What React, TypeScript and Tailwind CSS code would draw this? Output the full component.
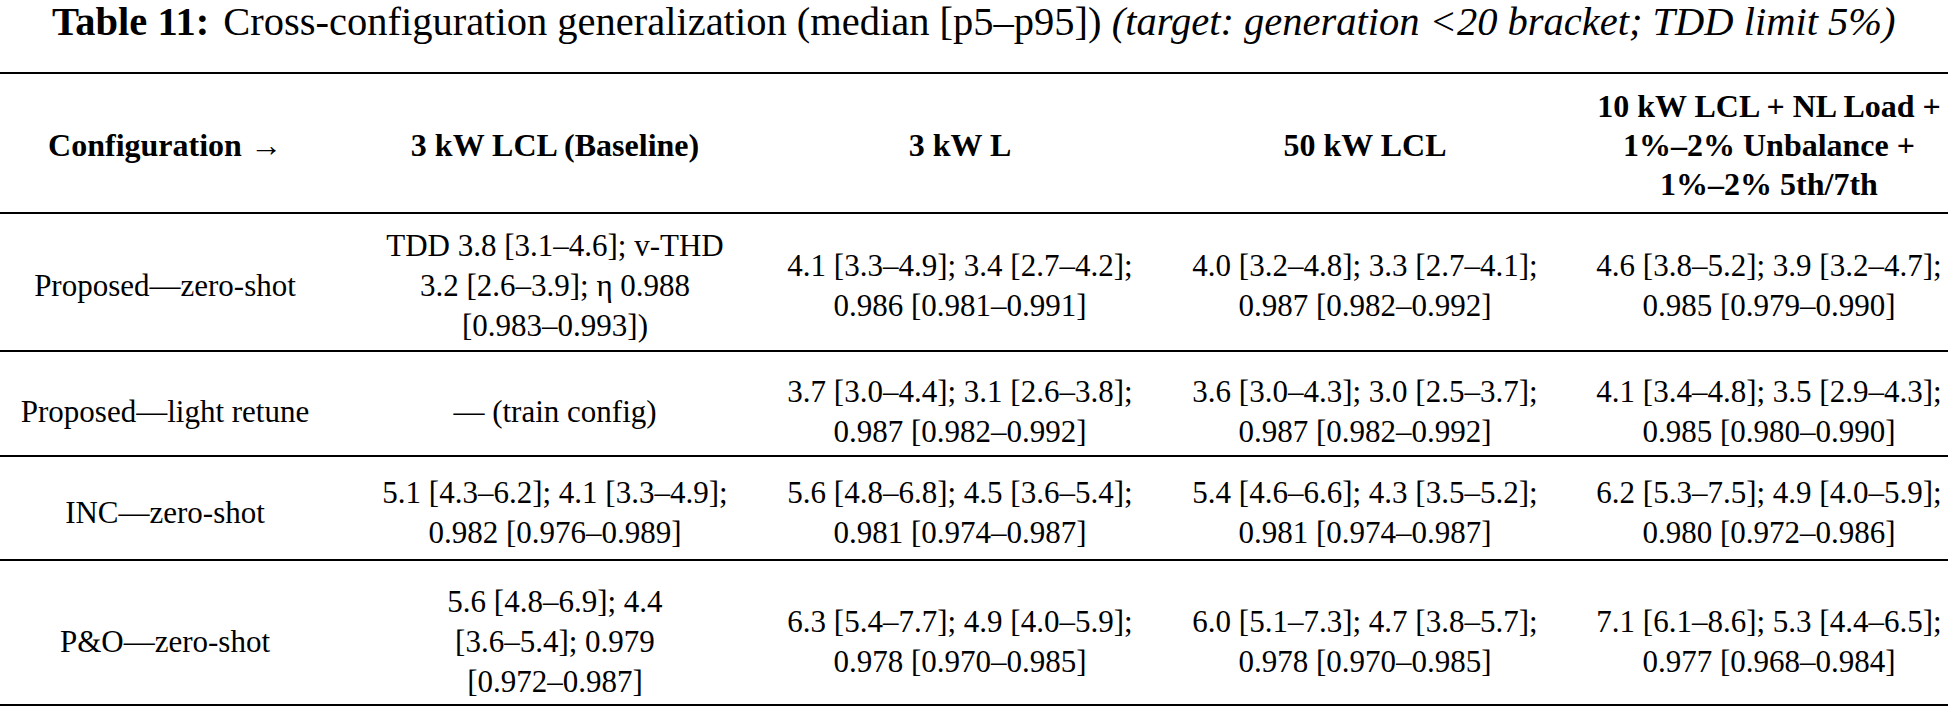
import React from 'react';

const rows = [
  {
    h: 'h-[138px] pt-[7px]',
    label: 'Proposed—zero-shot',
    cells: [
      ['TDD 3.8 [3.1–4.6]; v-THD', '3.2 [2.6–3.9]; η 0.988', '[0.983–0.993])'],
      ['4.1 [3.3–4.9]; 3.4 [2.7–4.2];', '0.986 [0.981–0.991]'],
      ['4.0 [3.2–4.8]; 3.3 [2.7–4.1];', '0.987 [0.982–0.992]'],
      ['4.6 [3.8–5.2]; 3.9 [3.2–4.7];', '0.985 [0.979–0.990]'],
    ],
  },
  {
    h: 'h-[105px] pt-[16px]',
    label: 'Proposed—light retune',
    cells: [
      ['— (train config)'],
      ['3.7 [3.0–4.4]; 3.1 [2.6–3.8];', '0.987 [0.982–0.992]'],
      ['3.6 [3.0–4.3]; 3.0 [2.5–3.7];', '0.987 [0.982–0.992]'],
      ['4.1 [3.4–4.8]; 3.5 [2.9–4.3];', '0.985 [0.980–0.990]'],
    ],
  },
  {
    h: 'h-[104px] pt-[10px]',
    label: 'INC—zero-shot',
    cells: [
      ['5.1 [4.3–6.2]; 4.1 [3.3–4.9];', '0.982 [0.976–0.989]'],
      ['5.6 [4.8–6.8]; 4.5 [3.6–5.4];', '0.981 [0.974–0.987]'],
      ['5.4 [4.6–6.6]; 4.3 [3.5–5.2];', '0.981 [0.974–0.987]'],
      ['6.2 [5.3–7.5]; 4.9 [4.0–5.9];', '0.980 [0.972–0.986]'],
    ],
  },
  {
    h: 'h-[145px] pt-[18px]',
    label: 'P&O—zero-shot',
    cells: [
      ['5.6 [4.8–6.9]; 4.4', '[3.6–5.4]; 0.979', '[0.972–0.987]'],
      ['6.3 [5.4–7.7]; 4.9 [4.0–5.9];', '0.978 [0.970–0.985]'],
      ['6.0 [5.1–7.3]; 4.7 [3.8–5.7];', '0.978 [0.970–0.985]'],
      ['7.1 [6.1–8.6]; 5.3 [4.4–6.5];', '0.977 [0.968–0.984]'],
    ],
  },
];

// column tracks: label | baseline | 3 kW L | 50 kW | combined
const cols = 'grid grid-cols-[330px_450px_360px_450px_358px] items-center justify-items-center text-center';

function Lines({ lines }: { lines: string[] }) {
  return (
    <div className="flex flex-col items-center">
      {lines.map((l, i) => (
        <span key={i} className="whitespace-nowrap">{l}</span>
      ))}
    </div>
  );
}

export default function App() {
  return (
    <div className="w-[1948px] h-[712px] bg-white text-black overflow-hidden font-['Liberation_Serif',serif]">
      <div className="h-[72px] pl-[52px] text-[40.5px] leading-[44px] whitespace-nowrap">
        <span className="font-bold">Table 11:</span>
        <span className="ml-[14px]">Cross-configuration generalization (median [p5–p95])</span>{' '}
        <span className="italic">(target: generation &lt;20 bracket; TDD limit 5%)</span>
      </div>

      <div className="border-t-2 border-black">
        <div className={`${cols} h-[140px] pt-[5px] border-b-2 border-black font-bold text-[32px] leading-[39px]`}>
          <span>Configuration →</span>
          <span>3 kW LCL (Baseline)</span>
          <span>3 kW L</span>
          <span>50 kW LCL</span>
          <Lines lines={['10 kW LCL + NL Load +', '1%–2% Unbalance +', '1%–2% 5th/7th']} />
        </div>

        {rows.map((r) => (
          <div key={r.label} className={`${cols} ${r.h} border-b-2 border-black text-[31px] leading-[40px]`}>
            <span className="whitespace-nowrap">{r.label}</span>
            {r.cells.map((c, i) => (
              <Lines key={i} lines={c} />
            ))}
          </div>
        ))}
      </div>
    </div>
  );
}
